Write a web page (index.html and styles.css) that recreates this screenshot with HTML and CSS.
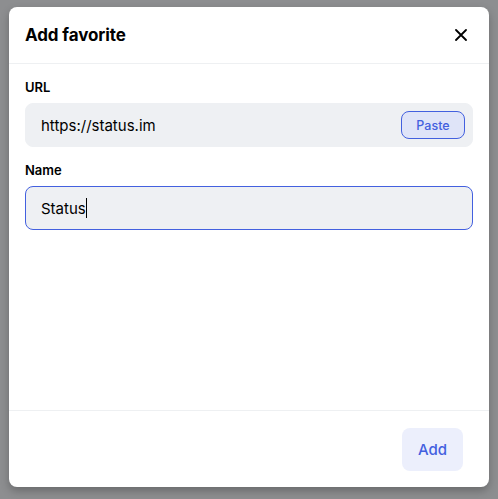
FILE: index.html
```html
<!DOCTYPE html>
<html>
<head>
<meta charset="utf-8">
<link rel="stylesheet" href="styles.css">
</head>
<body>
<div class="dialog">
  <div class="header">
    <h1 class="title">Add favorite</h1>
    <button class="close" aria-label="Close">
      <svg width="12" height="12" viewBox="0 0 12 12"><path d="M1 1L11 11M11 1L1 11" stroke="#000" stroke-width="1.8" stroke-linecap="round" fill="none"/></svg>
    </button>
  </div>
  <div class="body">
    <label class="label">URL</label>
    <div class="field">
      <span class="value">https://status.im</span>
      <button class="paste">Paste</button>
    </div>
    <label class="label">Name</label>
    <div class="field focused">
      <span class="value">Status</span><span class="caret"></span>
    </div>
  </div>
  <div class="footer">
    <button class="add">Add</button>
  </div>
</div>
</body>
</html>
```
FILE: styles.css
```css
html, body {
  margin: 0;
  padding: 0;
  height: 100%;
}
body {
  background: #8d8e90;
  font-family: Inter, "Noto Sans", sans-serif;
  color: #000;
  padding: 7px 9px 12px 9px;
  box-sizing: border-box;
}
.dialog {
  width: 480px;
  height: 480px;
  background: #fff;
  border-radius: 8px;
  box-shadow: 0 4px 8px rgba(0,0,0,0.25);
  display: flex;
  flex-direction: column;
}
.header {
  height: 56px;
  border-bottom: 1px solid #eef0f2;
  display: flex;
  align-items: center;
  justify-content: space-between;
  padding: 0 16px 0 16px;
}
.title {
  margin: 0;
  font-size: 17px;
  font-weight: 700;
  letter-spacing: -0.1px;
}
.close {
  border: 0;
  background: none;
  padding: 0;
  width: 24px;
  height: 24px;
  display: flex;
  align-items: center;
  justify-content: center;
}
.body {
  flex: 1;
  padding: 15px 16px 0 16px;
  display: flex;
  flex-direction: column;
}
.label {
  font-size: 13px;
  font-weight: 600;
  line-height: 16px;
  margin-bottom: 8px;
}
.field {
  height: 44px;
  box-sizing: border-box;
  background: #eef0f3;
  border-radius: 8px;
  display: flex;
  align-items: center;
  padding: 0 7px 0 15px;
  margin-bottom: 15px;
  border: 1px solid #eef0f3;
}
.field.focused {
  border-color: #4360df;
}
.value {
  font-size: 15px;
  color: #000;
}
.caret {
  display: inline-block;
  width: 1px;
  height: 20px;
  background: #000;
}
.paste {
  margin-left: auto;
  height: 28px;
  width: 64px;
  border: 1px solid #4360df;
  background: #dfe4f8;
  border-radius: 8px;
  color: #4360df;
  font-family: Inter, sans-serif;
  font-size: 12.5px;
  font-weight: 500;
  padding: 0;
}
.footer {
  height: 76px;
  border-top: 1px solid #eef0f2;
  display: flex;
  align-items: center;
  justify-content: flex-end;
  padding: 0 26px 0 0;
}
.add {
  width: 61px;
  height: 43px;
  border: 0;
  border-radius: 8px;
  background: #eceffc;
  color: #4360df;
  font-family: Inter, sans-serif;
  font-size: 15px;
  font-weight: 500;
  padding: 0;
}
```
